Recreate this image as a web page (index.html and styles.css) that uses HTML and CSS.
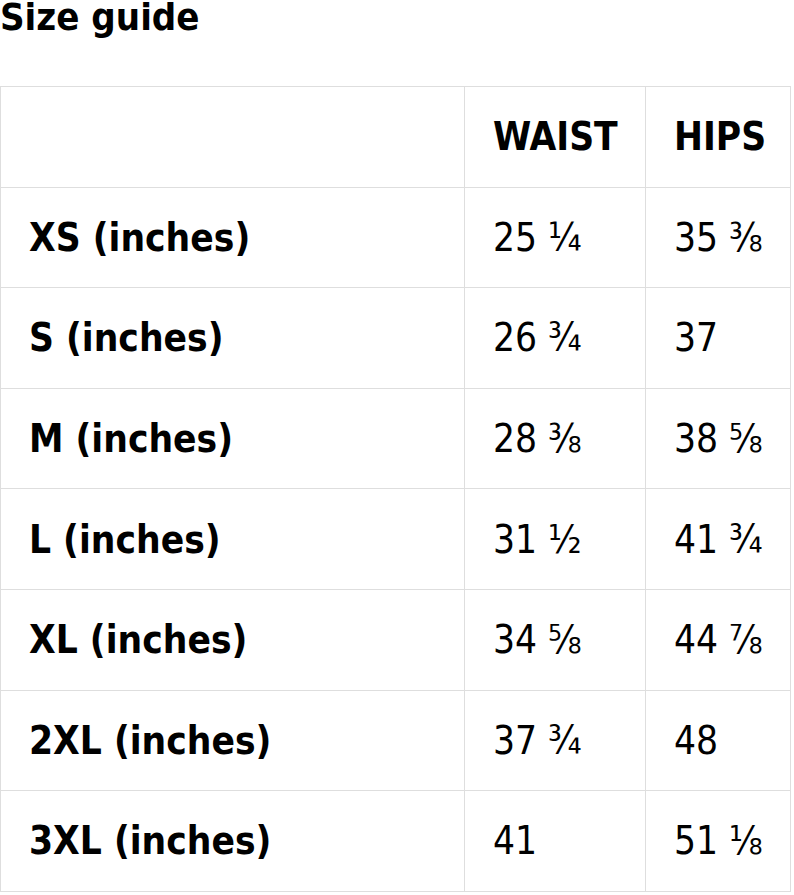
FILE: index.html
```html
<!DOCTYPE html>
<html>
<head>
<meta charset="utf-8">
<link rel="stylesheet" href="styles.css">
</head>
<body>
<h1 class="title">Size guide</h1>
<table class="sizes">
  <colgroup>
    <col class="c-size">
    <col class="c-waist">
    <col class="c-hips">
  </colgroup>
  <thead>
    <tr><th></th><th>WAIST</th><th>HIPS</th></tr>
  </thead>
  <tbody>
    <tr><th>XS (inches)</th><td>25 ¼</td><td>35 ⅜</td></tr>
    <tr><th>S (inches)</th><td>26 ¾</td><td>37</td></tr>
    <tr><th>M (inches)</th><td>28 ⅜</td><td>38 ⅝</td></tr>
    <tr><th>L (inches)</th><td>31 ½</td><td>41 ¾</td></tr>
    <tr><th>XL (inches)</th><td>34 ⅝</td><td>44 ⅞</td></tr>
    <tr><th>2XL (inches)</th><td>37 ¾</td><td>48</td></tr>
    <tr><th>3XL (inches)</th><td>41</td><td>51 ⅛</td></tr>
  </tbody>
</table>
</body>
</html>
```

FILE: styles.css
```css
html, body {
  margin: 0;
  padding: 0;
  background: #ffffff;
}
body {
  font-family: "DejaVu Sans Condensed", "DejaVu Sans", sans-serif;
  font-stretch: condensed;
  color: #000;
}
.title {
  margin: 0;
  font-size: 38px;
  line-height: 34px;
  font-weight: bold;
}
.sizes {
  margin-top: 52px;
  border-collapse: collapse;
  width: 790px;
  table-layout: fixed;
}
.c-size { width: 464px; }
.c-waist { width: 181px; }
.c-hips { width: 145px; }
.sizes th,
.sizes td {
  border: 1px solid #dedede;
  height: 99.6px;
  padding: 0 0 0 28px;
  font-size: 38.5px;
  text-align: left;
  vertical-align: middle;
}
.sizes th { font-weight: bold; }
.sizes td { font-weight: normal; }
```
